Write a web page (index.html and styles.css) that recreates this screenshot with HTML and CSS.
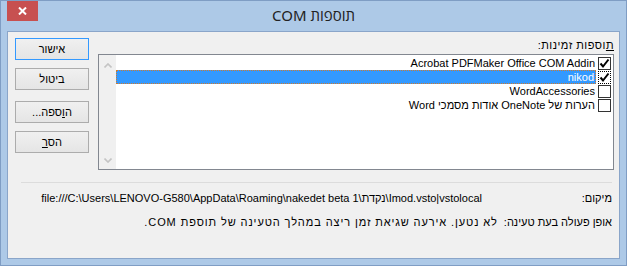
FILE: index.html
```html
<!DOCTYPE html>
<html lang="he" dir="rtl">
  <head>
    <meta charset="UTF-8" />
    <title>תוספות COM</title>
    <link rel="stylesheet" href="styles.css">
  </head>
  <body>
    <div class="window">
      <!-- שורת כותרת -->
      <div class="titlebar">
        <div class="title-spacer"></div>
        <div class="title">תוספות COM</div>
        <div class="title-close">
          <button class="close" aria-label="סגור">
            <svg width="9" height="8" viewBox="0 0 9 8">
              <path d="M1 0.5 L8 7.5 M8 0.5 L1 7.5" stroke="#fff" stroke-width="2" fill="none" />
            </svg>
          </button>
        </div>
      </div>

      <div class="client">
        <div class="top">
          <div class="main">
            <div class="label"><u>ת</u>וספות זמינות:</div>
            <div class="listbox">
              <div class="rows">
                <div class="item">
                  <span class="check checked">
                    <svg width="11" height="11" viewBox="0 0 11 11"><path d="M1.5 5.5 L4 8.5 L9.5 1.5" stroke="#000" stroke-width="2" fill="none" /></svg>
                  </span>
                  <span class="name">Acrobat PDFMaker Office COM Addin</span>
                </div>
                <div class="item selected">
                  <span class="check checked">
                    <svg width="11" height="11" viewBox="0 0 11 11"><path d="M1.5 5.5 L4 8.5 L9.5 1.5" stroke="#000" stroke-width="2" fill="none" /></svg>
                  </span>
                  <span class="name">nikod</span>
                </div>
                <div class="item">
                  <span class="check"></span>
                  <span class="name">WordAccessories</span>
                </div>
                <div class="item">
                  <span class="check"></span>
                  <span class="name">הערות של OneNote אודות מסמכי Word</span>
                </div>
              </div>
              <div class="scrollbar">
                <svg width="8" height="5" viewBox="0 0 8 5"><path d="M0.5 4.5 L4 1 L7.5 4.5" stroke="#c4c4c4" stroke-width="1.6" fill="none" /></svg>
                <svg width="8" height="5" viewBox="0 0 8 5"><path d="M0.5 0.5 L4 4 L7.5 0.5" stroke="#c4c4c4" stroke-width="1.6" fill="none" /></svg>
              </div>
            </div>
          </div>

          <div class="buttons">
            <button class="btn default">אישור</button>
            <button class="btn">ביטול</button>
            <button class="btn gap">ה<u>ו</u>ספה...</button>
            <button class="btn">הס<u>ר</u></button>
          </div>
        </div>

        <!-- פרטי התוספת -->
        <div class="details">
          <div class="detail-row">
            <span class="detail-label">מיקום:</span>
            <span class="detail-value path"><bdi dir="ltr">file:///C:\Users\LENOVO-G580\AppData\Roaming\nakedet beta 1\נקדת\Imod.vsto|vstolocal</bdi></span>
          </div>
          <div class="detail-row">
            <span class="detail-label">אופן פעולה בעת טעינה:</span>
            <span class="detail-value status">לא נטען. אירעה שגיאת זמן ריצה במהלך הטעינה של תוספת COM.</span>
          </div>
        </div>
      </div>
    </div>
  </body>
</html>
```

FILE: styles.css
```css
body {
  margin: 0;
  font-family: "Liberation Sans", Arial, sans-serif;
  font-size: 11px;
  color: #000;
  background-color: #adc9e7;
}

.window {
  width: 627px;
  height: 266px;
  box-sizing: border-box;
  border: 1px solid #7f9dc4;
  background-color: #adc9e7;
}

/* שורת כותרת */
.titlebar {
  height: 30px;
  display: grid;
  grid-template-columns: 1fr auto 1fr;
}

.title {
  font-family: "Noto Sans", "Open Sans", sans-serif;
  font-size: 15px;
  line-height: 29px;
  color: #222;
}

.title-close {
  display: flex;
  justify-content: flex-end;
  padding-left: 6px;
}

.close {
  width: 31px;
  height: 20px;
  border: none;
  padding: 0;
  background-color: #c75050;
  display: flex;
  justify-content: center;
  align-items: center;
}

/* אזור התוכן */
.client {
  margin: 0 6px;
  height: 228px;
  box-sizing: border-box;
  border: 1px solid #8aa5c9;
  background-color: #f0f0f0;
  padding: 6px 5px 0 7px;
}

.top {
  display: flex;
  gap: 9px;
}

.main {
  width: 516px;
}

.label {
  line-height: 14px;
  height: 14px;
  margin-bottom: 2px;
  letter-spacing: 0.5px;
}

.listbox {
  height: 116px;
  box-sizing: border-box;
  border: 1px solid #828790;
  background-color: #fff;
  display: flex;
}

.rows {
  flex: 1;
  padding-top: 1px;
}

.item {
  height: 14px;
  display: flex;
  align-items: flex-start;
  gap: 2px;
  padding-right: 2px;
}

.check {
  width: 13px;
  height: 13px;
  margin-top: 1px;
  box-sizing: border-box;
  border: 1px solid #333;
  background-color: #fff;
  display: flex;
  justify-content: center;
  align-items: center;
}

.name {
  flex: 1;
  height: 14px;
  line-height: 14px;
  box-sizing: border-box;
  padding-right: 1px;
  white-space: nowrap;
}

.item.selected .name {
  background-color: #3399ff;
  color: #fff;
  border: 1px dotted #d07a2c;
  line-height: 12px;
}

.item.selected .check {
  border: 1px dotted #000;
}

.scrollbar {
  width: 17px;
  background-color: #f0f0f0;
  display: flex;
  flex-direction: column;
  justify-content: space-between;
  align-items: center;
  padding: 8px 0 6px;
}

/* כפתורים */
.buttons {
  width: 74px;
  display: flex;
  flex-direction: column;
  gap: 8px;
}

.btn {
  width: 74px;
  height: 22px;
  padding: 0;
  font-family: inherit;
  font-size: 11px;
  color: #000;
  border: 1px solid #acacac;
  background: linear-gradient(#f0f0f0, #e5e5e5);
}

.btn.default {
  border-color: #3399ff;
}

.btn.gap {
  margin-top: 3px;
}

/* פרטים */
.details {
  margin: 12px 2px 0 6px;
  border-top: 1px solid #dcdcdc;
  padding: 8px 0 0;
  display: flex;
  flex-direction: column;
  gap: 10px;
}

.detail-row {
  display: flex;
  line-height: 14px;
  white-space: nowrap;
}

.detail-label {
  min-width: 102px;
  flex-shrink: 0;
  margin-left: 6px;
}

.detail-value.path {
  padding-right: 22px;
}

.detail-value.status {
  letter-spacing: 0.9px;
}
```
